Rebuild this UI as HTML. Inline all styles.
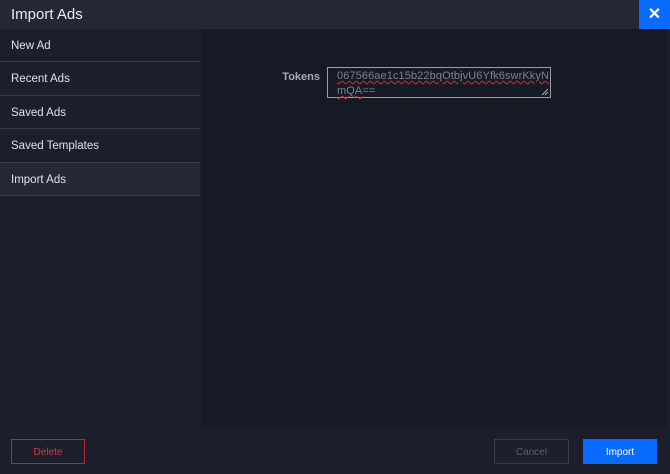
<!DOCTYPE html>
<html><head><meta charset="utf-8"><style>
*{margin:0;padding:0;box-sizing:border-box}
body{width:670px;height:474px;background:#1c1f2b;font-family:"Liberation Sans",Arial,sans-serif;position:relative;overflow:hidden;color:#e6e8ee}
.hdr{position:absolute;left:0;top:0;width:670px;height:29px;background:#252834}
.hdr .t{position:absolute;left:11px;top:6px;font-size:15px;color:#e8eaf0}
.close{position:absolute;left:639px;top:0;width:31px;height:29px;background:#0a6cff;color:#fff;font-size:16px;font-weight:bold;text-align:center;line-height:29px}
.side{position:absolute;left:0;top:29px;width:200px}
.it{height:33.4px;border-bottom:1px solid #3a3d4a;font-size:11.5px;padding-left:11px;line-height:35px;color:#e0e2e8}
.it.a{background:#262935}
.main{position:absolute;left:201px;top:29px;width:466px;height:398px;background:#161a25}
.lbl{position:absolute;right:350px;top:71px;font-size:11px;font-weight:bold;color:#a7abb6}
.ta{position:absolute;left:327px;top:67px;width:224px;height:31px;border:1px solid #9a9ea8;background:#161a25;font-size:11px;color:#7d828e;padding:1px 0 0 9px;line-height:15px;letter-spacing:0.1px}
.ta span{text-decoration:underline wavy #c02a2a}
.grip{position:absolute;right:1px;bottom:1px}
.btn{position:absolute;top:439px;height:25px;width:74px;font-size:10px;text-align:center;line-height:25px}
.del{left:11px;border:1px solid #b32a30;color:#d03a3e}
.can{left:494px;border:1px solid #3a3d48;color:#5b5f6a;width:75px}
.imp{left:583px;background:#0a6cff;color:#fff;border:1px solid #0a6cff}
</style></head><body>
<div class="hdr"><div class="t">Import Ads</div><div class="close">✕</div></div>
<div class="side">
<div class="it">New Ad</div>
<div class="it">Recent Ads</div>
<div class="it">Saved Ads</div>
<div class="it">Saved Templates</div>
<div class="it a">Import Ads</div>
</div>
<div class="main"></div>
<div class="lbl">Tokens</div>
<div class="ta"><span>067566ae1c15b22bqOtbjvU6Yfk6swrKkyN</span><br><span>mQA</span>==
<svg class="grip" width="9" height="9" viewBox="0 0 9 9"><path d="M8 2L2 8M8 5L5 8" stroke="#aaa" stroke-width="1"/></svg></div>
<div class="btn del">Delete</div>
<div class="btn can">Cancel</div>
<div class="btn imp">Import</div>
</body></html>
